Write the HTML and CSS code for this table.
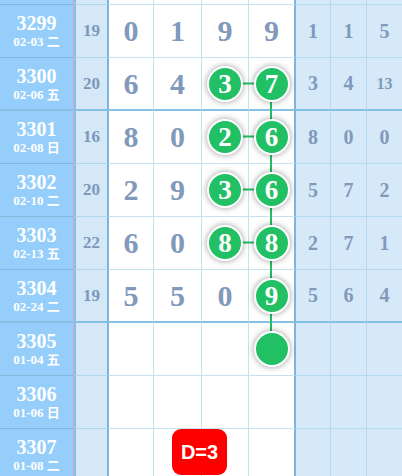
FILE: index.html
```html
<!DOCTYPE html>
<html lang="zh">
<head>
<meta charset="utf-8">
<link rel="stylesheet" href="styles.css">
</head>
<body>
<div class="board">
  <div class="row stub">
    <div class="c per"></div><div class="c sum"></div>
    <div class="c d"></div><div class="c d"></div><div class="c d"></div><div class="c d last"></div>
    <div class="c r"></div><div class="c r"></div><div class="c r"></div>
  </div>

  <div class="row">
    <div class="c per"><span class="no">3299</span><span class="dt">02-03 二</span></div>
    <div class="c sum">19</div>
    <div class="c d">0</div><div class="c d">1</div><div class="c d">9</div><div class="c d last">9</div>
    <div class="c r">1</div><div class="c r">1</div><div class="c r">5</div>
  </div>

  <div class="row thick">
    <div class="c per"><span class="no">3300</span><span class="dt">02-06 五</span></div>
    <div class="c sum">20</div>
    <div class="c d">6</div><div class="c d">4</div>
    <div class="c d"><span class="ball">3</span></div>
    <div class="c d last"><span class="ball">7</span></div>
    <div class="c r">3</div><div class="c r">4</div><div class="c r small">13</div>
  </div>

  <div class="row">
    <div class="c per"><span class="no">3301</span><span class="dt">02-08 日</span></div>
    <div class="c sum">16</div>
    <div class="c d">8</div><div class="c d">0</div>
    <div class="c d"><span class="ball">2</span></div>
    <div class="c d last"><span class="ball">6</span></div>
    <div class="c r">8</div><div class="c r">0</div><div class="c r">0</div>
  </div>

  <div class="row">
    <div class="c per"><span class="no">3302</span><span class="dt">02-10 二</span></div>
    <div class="c sum">20</div>
    <div class="c d">2</div><div class="c d">9</div>
    <div class="c d"><span class="ball">3</span></div>
    <div class="c d last"><span class="ball">6</span></div>
    <div class="c r">5</div><div class="c r">7</div><div class="c r">2</div>
  </div>

  <div class="row">
    <div class="c per"><span class="no">3303</span><span class="dt">02-13 五</span></div>
    <div class="c sum">22</div>
    <div class="c d">6</div><div class="c d">0</div>
    <div class="c d"><span class="ball">8</span></div>
    <div class="c d last"><span class="ball">8</span></div>
    <div class="c r">2</div><div class="c r">7</div><div class="c r">1</div>
  </div>

  <div class="row thick">
    <div class="c per"><span class="no">3304</span><span class="dt">02-24 二</span></div>
    <div class="c sum">19</div>
    <div class="c d">5</div><div class="c d">5</div><div class="c d">0</div>
    <div class="c d last"><span class="ball">9</span></div>
    <div class="c r">5</div><div class="c r">6</div><div class="c r">4</div>
  </div>

  <div class="row">
    <div class="c per"><span class="no">3305</span><span class="dt">01-04 五</span></div>
    <div class="c sum"></div>
    <div class="c d"></div><div class="c d"></div><div class="c d"></div>
    <div class="c d last"><span class="ball"></span></div>
    <div class="c r"></div><div class="c r"></div><div class="c r"></div>
  </div>

  <div class="row">
    <div class="c per"><span class="no">3306</span><span class="dt">01-06 日</span></div>
    <div class="c sum"></div>
    <div class="c d"></div><div class="c d"></div><div class="c d"></div><div class="c d last"></div>
    <div class="c r"></div><div class="c r"></div><div class="c r"></div>
  </div>

  <div class="row">
    <div class="c per"><span class="no">3307</span><span class="dt">01-08 二</span></div>
    <div class="c sum"></div>
    <div class="c d"></div><div class="c d"></div><div class="c d"></div><div class="c d last"></div>
    <div class="c r"></div><div class="c r"></div><div class="c r"></div>
  </div>

  <svg class="links" width="402" height="476" viewBox="0 0 402 476">
    <g stroke="#22bf63" stroke-width="2">
      <line x1="225" y1="83.5" x2="271" y2="83.5"/>
      <line x1="225" y1="136.5" x2="271" y2="136.5"/>
      <line x1="225" y1="189.5" x2="271" y2="189.5"/>
      <line x1="225" y1="242.5" x2="271" y2="242.5"/>
      <line x1="271" y1="83" x2="271" y2="348"/>
    </g>
  </svg>

  <div class="badge">D=3</div>
</div>
</body>
</html>
```

FILE: styles.css
```css
html, body {
  margin: 0;
  padding: 0;
  background: #ffffff;
}

body {
  width: 402px;
  height: 476px;
  overflow: hidden;
}

.board {
  position: relative;
  width: 403px;
  font-family: "Liberation Serif", "Noto Sans CJK SC", serif;
  font-weight: bold;
}

.row {
  display: grid;
  grid-template-columns: 74px 35px 45px 48px 47px 47px 35px 36px 36px;
  height: 53px;
}

.row.stub {
  height: 5px;
}

.c {
  box-sizing: border-box;
  display: flex;
  align-items: center;
  justify-content: center;
  border-bottom: 1px solid #c6e1f1;
}

.per {
  background: #95cefb;
  border-right: 1px solid #d8a6d2;
  border-bottom-color: #86b7da;
  flex-direction: column;
  color: #ffffff;
  padding-top: 2px;
}

.per .no {
  font-size: 20px;
  line-height: 19px;
}

.per .dt {
  font-size: 13px;
  line-height: 17px;
}

.sum {
  background: #d5e8f8;
  border-left: 2px solid #86bfe2;
  border-right: 2px solid #7fb5da;
  border-bottom-color: #b2d6ec;
  color: #7d97ba;
  font-size: 17px;
}

.d {
  background: #ffffff;
  border-right: 1px solid #c6e1f1;
  color: #8199bb;
  font-size: 30px;
}

.d.last {
  border-right: 2px solid #7fb5da;
}

.r {
  background: #d6e9f9;
  border-right: 1px solid #b4d8ee;
  border-bottom-color: #b4d8ee;
  color: #8199bb;
  font-size: 20px;
}

.r.small {
  font-size: 16px;
}

.row.thick .c {
  border-bottom: 2px solid #86c0e3;
}

.ball {
  position: relative;
  z-index: 2;
  box-sizing: border-box;
  width: 36px;
  height: 36px;
  border-radius: 50%;
  border: 2px solid #ffffff;
  background: #22c064;
  box-shadow: 0 0 6px rgba(0, 0, 0, 0.4);
  color: #ffffff;
  font-size: 27px;
  line-height: 32px;
  text-align: center;
}

.links {
  position: absolute;
  top: 0;
  left: 0;
  z-index: 1;
}

.badge {
  position: absolute;
  left: 172px;
  top: 429px;
  z-index: 3;
  width: 55px;
  height: 46px;
  border-radius: 9px;
  background: #ff0000;
  color: #ffffff;
  font-family: "Liberation Sans", Arial, sans-serif;
  font-weight: bold;
  font-size: 20px;
  display: flex;
  align-items: center;
  justify-content: center;
}
```
